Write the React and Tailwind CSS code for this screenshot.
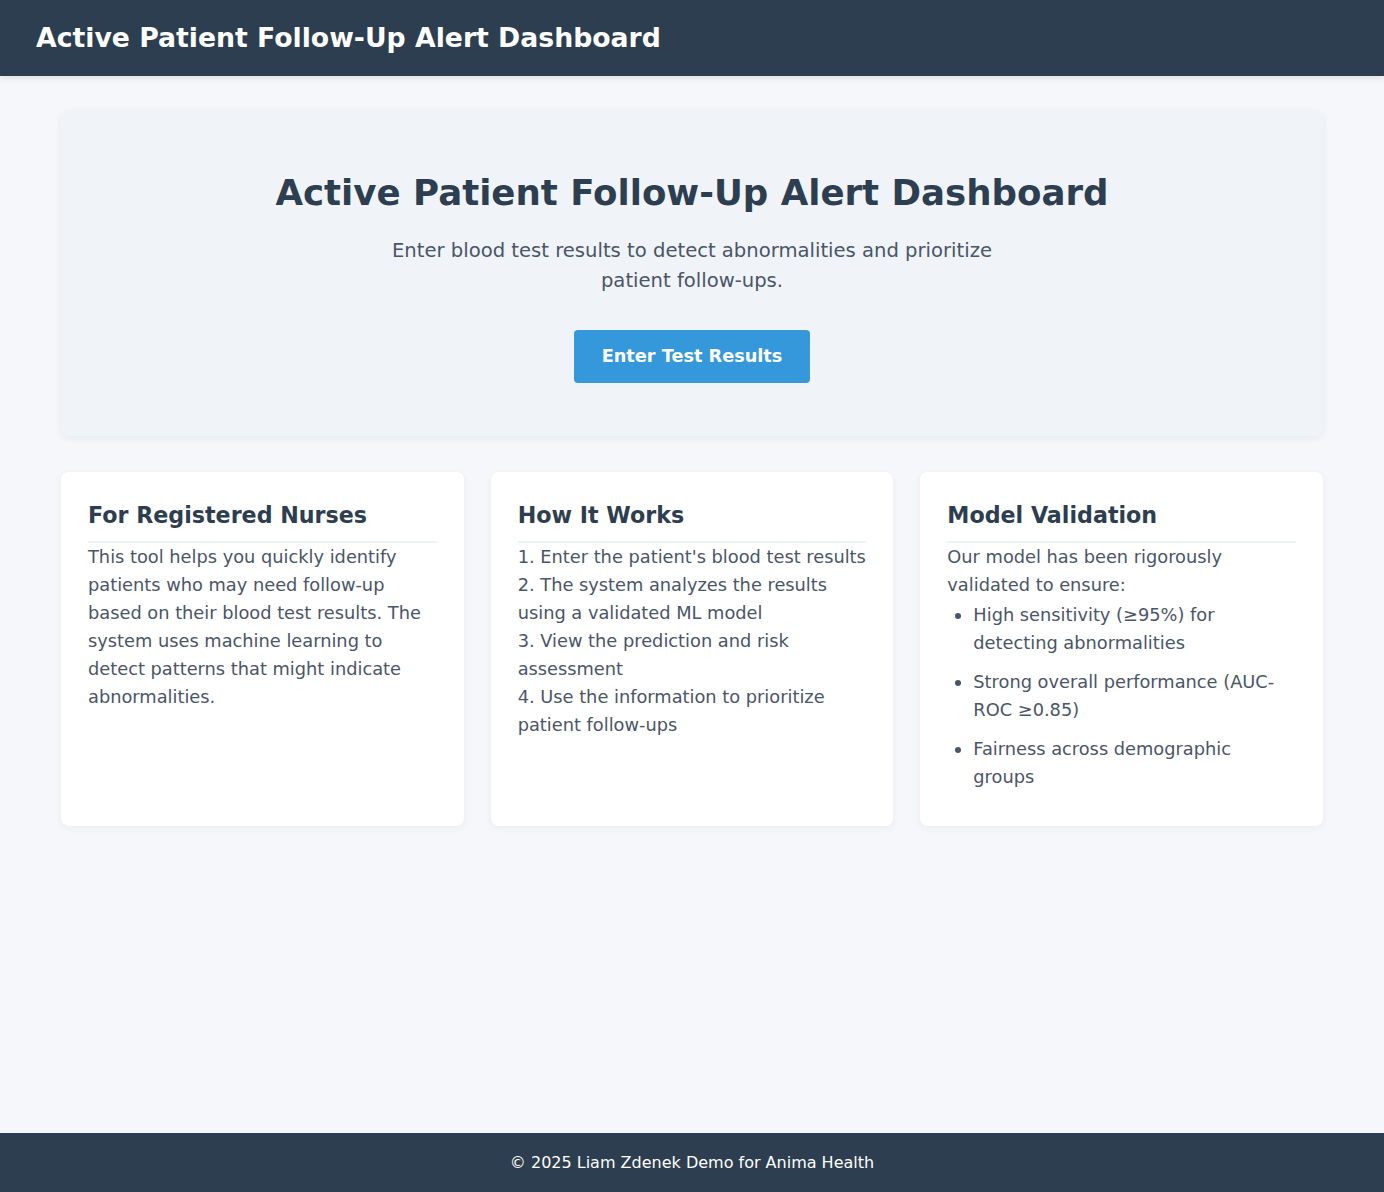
export default function App() {
  const font = { fontFamily: '"DejaVu Sans", Verdana, sans-serif' };
  return (
    <div className="min-h-screen flex flex-col bg-[#f5f7fa] font-['DejaVu_Sans',Verdana,sans-serif]" style={font}>
      <header className="h-[76px] flex items-center px-[36px] bg-[#2c3e50] shadow-[0_2px_6px_rgba(0,0,0,0.1)] relative z-10">
        <h1 className="text-[26.7px] font-bold text-white leading-none">Active Patient Follow-Up Alert Dashboard</h1>
      </header>
      <main className="flex-1 px-[61px] pt-[35px] pb-[36px]">
        <section className="bg-[#f0f4f8] rounded-[8px] shadow-[0_2px_8px_rgba(0,0,0,0.06)] flex flex-col items-center text-center pt-[61px] pb-[53px] px-8">
          <h2 className="text-[35.6px] font-bold text-[#2c3e50] leading-[42px] mb-[22px]">Active Patient Follow-Up Alert Dashboard</h2>
          <p className="text-[19.6px] leading-[30px] text-[#4a5568] max-w-[630px] mb-[34px]">
            Enter blood test results to detect abnormalities and prioritize patient follow-ups.
          </p>
          <button className="bg-[#3498db] text-white font-bold text-[17.7px] leading-[21px] py-4 px-7 rounded-[4px]">
            Enter Test Results
          </button>
        </section>
        <div className="grid grid-cols-3 gap-[27px] mt-[36px]">
          <Card title="For Registered Nurses">
            <p>
              This tool helps you quickly identify patients who may need follow-up based on their blood test results. The system uses machine learning to detect patterns that might indicate abnormalities.
            </p>
          </Card>
          <Card title="How It Works">
            <p>1. Enter the patient's blood test results</p>
            <p>2. The system analyzes the results using a validated ML model</p>
            <p>3. View the prediction and risk assessment</p>
            <p>4. Use the information to prioritize patient follow-ups</p>
          </Card>
          <Card title="Model Validation">
            <p>Our model has been rigorously validated to ensure:</p>
            <ul className="list-disc pl-[26px] mt-[2px] marker:text-[#4a5568]">
              <li className="mb-[11px]">High sensitivity (≥95%) for detecting abnormalities</li>
              <li className="mb-[11px]">Strong overall performance (AUC-ROC ≥0.85)</li>
              <li className="mb-[11px]">Fairness across demographic groups</li>
            </ul>
          </Card>
        </div>
      </main>
      <footer className="bg-[#2c3e50] text-white text-center text-[16px] leading-[23px] py-[18px]">
        © 2025 Liam Zdenek Demo for Anima Health
      </footer>
    </div>
  );
}

function Card({ title, children }) {
  return (
    <div className="bg-white rounded-[8px] shadow-[0_2px_8px_rgba(0,0,0,0.05)] pt-[30px] px-[27px] pb-[24px]">
      <h3 className="text-[22.2px] font-bold text-[#2c3e50] leading-[27px] pb-[12px] border-b-2 border-[#edf2f7]">{title}</h3>
      <div className="text-[17.8px] leading-[28px] text-[#4a5568]">{children}</div>
    </div>
  );
}
